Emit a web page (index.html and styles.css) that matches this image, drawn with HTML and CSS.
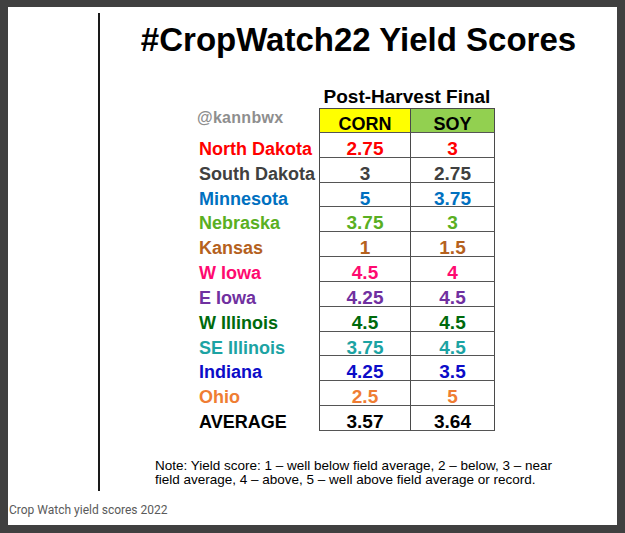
FILE: index.html
```html
<!DOCTYPE html>
<html lang="en">
<head>
<meta charset="utf-8">
<title>#CropWatch22 Yield Scores</title>
<link rel="stylesheet" href="styles.css">
</head>
<body>
<div class="page">
  <div class="body-row">
    <div class="gutter"></div>
    <div class="main">
      <h1 class="title">#CropWatch22 Yield Scores</h1>
      <div class="table-block">
        <div class="caption-row">
          <div class="caption">Post-Harvest Final</div>
        </div>
        <div class="grid">
          <div class="label handle">@kannbwx</div>
          <div class="cell head corn first">CORN</div>
          <div class="cell head soy">SOY</div>

          <div class="label c-nd">North Dakota</div>
          <div class="cell num c-nd first">2.75</div>
          <div class="cell num c-nd">3</div>

          <div class="label c-sd">South Dakota</div>
          <div class="cell num c-sd first">3</div>
          <div class="cell num c-sd">2.75</div>

          <div class="label c-mn">Minnesota</div>
          <div class="cell num c-mn first">5</div>
          <div class="cell num c-mn">3.75</div>

          <div class="label c-ne">Nebraska</div>
          <div class="cell num c-ne first">3.75</div>
          <div class="cell num c-ne">3</div>

          <div class="label c-ks">Kansas</div>
          <div class="cell num c-ks first">1</div>
          <div class="cell num c-ks">1.5</div>

          <div class="label c-wi">W Iowa</div>
          <div class="cell num c-wi first">4.5</div>
          <div class="cell num c-wi">4</div>

          <div class="label c-ei">E Iowa</div>
          <div class="cell num c-ei first">4.25</div>
          <div class="cell num c-ei">4.5</div>

          <div class="label c-wil">W Illinois</div>
          <div class="cell num c-wil first">4.5</div>
          <div class="cell num c-wil">4.5</div>

          <div class="label c-seil">SE Illinois</div>
          <div class="cell num c-seil first">3.75</div>
          <div class="cell num c-seil">4.5</div>

          <div class="label c-in">Indiana</div>
          <div class="cell num c-in first">4.25</div>
          <div class="cell num c-in">3.5</div>

          <div class="label c-oh">Ohio</div>
          <div class="cell num c-oh first">2.5</div>
          <div class="cell num c-oh">5</div>

          <div class="label c-avg">AVERAGE</div>
          <div class="cell num c-avg first">3.57</div>
          <div class="cell num c-avg">3.64</div>
        </div>
      </div>
      <p class="note">Note: Yield score: 1 – well below field average, 2 – below, 3 – near<br>field average, 4 – above, 5 – well above field average or record.</p>
    </div>
  </div>
  <div class="footer">Crop Watch yield scores 2022</div>
</div>
</body>
</html>
```

FILE: styles.css
```css
* {
  box-sizing: border-box;
}

html, body {
  margin: 0;
  padding: 0;
}

body {
  width: 625px;
  height: 533px;
  background: #404040;
  padding: 7px 8px;
  font-family: "Liberation Sans", Arial, sans-serif;
}

.page {
  width: 609px;
  height: 518px;
  background: #ffffff;
  display: flex;
  flex-direction: column;
}

.body-row {
  display: flex;
  padding-top: 6px;
}

.gutter {
  width: 90px;
  flex: none;
}

.main {
  flex: 1;
  height: 478px;
  border-left: 2px solid #1a1a1a;
  display: flex;
  flex-direction: column;
}

.title {
  margin: 8px 0 0 0;
  font-size: 33px;
  line-height: 38px;
  font-weight: bold;
  text-align: center;
  color: #000;
}

.table-block {
  margin: 27px 0 0 99px;
  width: 296px;
}

.caption-row {
  display: flex;
  padding-left: 120px;
}

.caption {
  width: 176px;
  text-align: center;
  font-size: 19px;
  line-height: 22px;
  font-weight: bold;
  color: #000;
  white-space: nowrap;
}

.grid {
  display: grid;
  grid-template-columns: 120px 92px 84px;
  grid-auto-rows: 24.85px;
}

.label {
  font-size: 18px;
  font-weight: bold;
  line-height: 24.85px;
  padding-top: 4px;
  white-space: nowrap;
}

.label.handle {
  color: #8e8e8e;
  font-size: 16px;
  line-height: 16px;
  padding-top: 2px;
  margin-left: -2px;
  letter-spacing: 0.3px;
}

.cell {
  border-right: 1px solid #4a4a4a;
  border-bottom: 1px solid #555;
  text-align: center;
  font-weight: bold;
  line-height: 24.85px;
  padding-top: 4px;
  white-space: nowrap;
}

.cell.first {
  border-left: 1px solid #4a4a4a;
}

.cell.head {
  border-top: 1px solid #4a4a4a;
  font-size: 18px;
  padding-top: 3px;
  color: #000;
}

.cell.corn {
  background: #ffff00;
}

.cell.soy {
  background: #92d050;
}

.cell.num {
  font-size: 19px;
}

.c-nd { color: #ff0000; }
.c-sd { color: #404040; }
.c-mn { color: #0070c0; }
.c-ne { color: #5aaf22; }
.c-ks { color: #b5611d; }
.c-wi { color: #ff0a70; }
.c-ei { color: #7030a0; }
.c-wil { color: #006a0c; }
.c-seil { color: #1ca3a3; }
.c-in { color: #0c0cc8; }
.c-oh { color: #ef7d33; }
.c-avg { color: #000000; }

.note {
  margin: 28px 0 0 55px;
  font-size: 13.5px;
  line-height: 14px;
  color: #000;
}

.footer {
  margin-top: 12px;
  padding-left: 1px;
  font-family: Roboto, "Liberation Sans", sans-serif;
  font-size: 12px;
  line-height: 14px;
  color: #5a5a5a;
}
```
